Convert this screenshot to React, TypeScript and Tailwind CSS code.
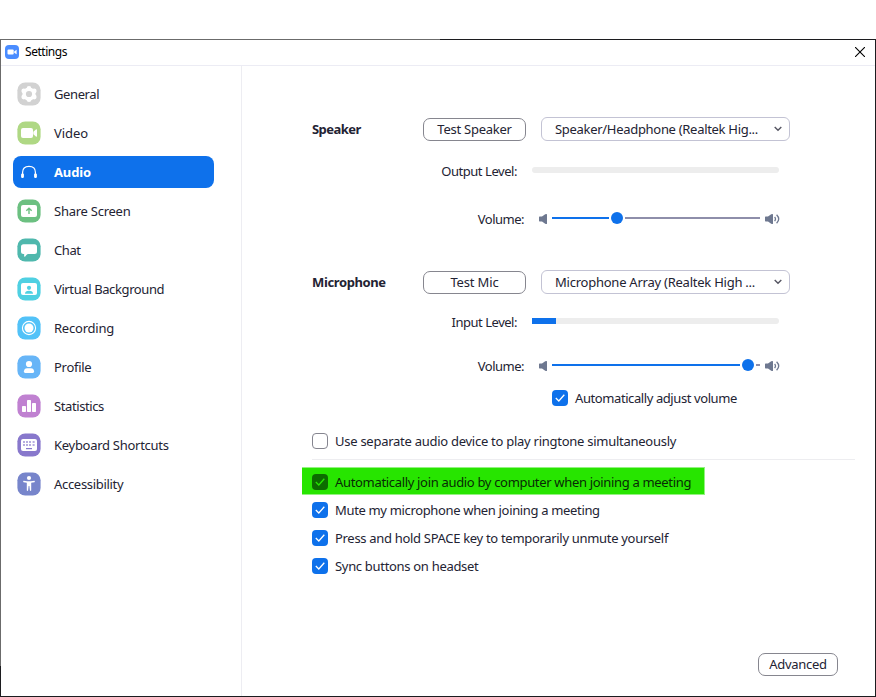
import React from "react";

const navItems = [
  { name: "General", color: "#d2d2d2", track: "tracking-[-0.4px]" },
  { name: "Video", color: "#afd884", track: "tracking-[-0.05px]" },
  { name: "Audio", color: "", track: "tracking-[-0.15px]" },
  { name: "Share Screen", color: "#6cc081", track: "tracking-[-0.25px]" },
  { name: "Chat", color: "#4fb8ad", track: "tracking-[-0.4px]" },
  { name: "Virtual Background", color: "#4fd0e2", track: "tracking-[-0.39px]" },
  { name: "Recording", color: "#52c2f8", track: "tracking-[-0.22px]" },
  { name: "Profile", color: "#67b5f7", track: "tracking-[-0.28px]" },
  { name: "Statistics", color: "#c081d1", track: "tracking-[-0.4px]" },
  { name: "Keyboard Shortcuts", color: "#8878cc", track: "tracking-[-0.28px]" },
  { name: "Accessibility", color: "#7785cb", track: "tracking-[-0.31px]" },
];

function Glyph({ name, color }: { name: string; color: string }) {
  switch (name) {
    case "General":
      return (
        <g>
          <g fill="#fff">
            <circle cx="12" cy="12" r="6.6" />
            <circle cx="12" cy="6.2" r="2.3" />
            <circle cx="12" cy="17.8" r="2.3" />
            <circle cx="6.8" cy="9" r="2.4" />
            <circle cx="17.2" cy="9" r="2.4" />
            <circle cx="6.8" cy="15" r="2.4" />
            <circle cx="17.2" cy="15" r="2.4" />
          </g>
          <circle cx="12" cy="12" r="3.1" fill={color} />
        </g>
      );
    case "Video":
      return (
        <g fill="#fff">
          <rect x="4" y="7" width="12" height="10" rx="2" />
          <path d="M16.3 10.8L19.2 8.2Q20 8 20 9V15Q20 16 19.2 15.8L16.3 13.2Z" />
        </g>
      );
    case "Audio":
      return (
        <g>
          <path d="M5.6 16.5V12.2C5.6 8.3 8.4 6.3 12 6.3s6.4 2 6.4 5.9v4.3" fill="none" stroke="#fff" strokeWidth="1.2" />
          <rect x="4.1" y="13.6" width="2.8" height="4.4" rx="1.2" fill="#fff" />
          <rect x="17.1" y="13.6" width="2.8" height="4.4" rx="1.2" fill="#fff" />
        </g>
      );
    case "Share Screen":
      return (
        <g>
          <rect x="4" y="6" width="16" height="12" rx="2" fill="#fff" />
          <path d="M12 15V9.8M9.3 11.8L12 9.2L14.7 11.8" fill="none" stroke={color} strokeWidth="1.4" />
        </g>
      );
    case "Chat":
      return <path d="M6.5 6.3H17.5Q20 6.3 20 8.8V13.5Q20 16 17.5 16H11.4Q10.2 16 9.2 17.3Q8 19 7.4 18.8Q7 18.6 7.2 16H6.5Q4 16 4 13.5V8.8Q4 6.3 6.5 6.3Z" fill="#fff" />;
    case "Virtual Background":
      return (
        <g>
          <rect x="4" y="6" width="16" height="12" rx="2" fill="#fff" />
          <circle cx="12" cy="10.8" r="2.1" fill={color} />
          <path d="M8 16.8Q8 13.8 12 13.8T16 16.8Z" fill={color} />
        </g>
      );
    case "Recording":
      return (
        <g>
          <circle cx="12" cy="12" r="6.6" fill="none" stroke="#fff" strokeWidth="1.1" />
          <circle cx="12" cy="12" r="4.5" fill="#fff" />
        </g>
      );
    case "Profile":
      return (
        <g fill="#fff">
          <circle cx="12" cy="9" r="3.1" />
          <path d="M6.9 16.6Q7.2 13.2 10 13.2H14Q16.8 13.2 17.1 16.6Q17.1 18 15.9 18H8.1Q6.9 18 6.9 16.6Z" />
        </g>
      );
    case "Statistics":
      return (
        <g fill="#fff">
          <rect x="5" y="12" width="4" height="6" rx=".7" />
          <rect x="10" y="6" width="4" height="12" rx=".7" />
          <rect x="15" y="9" width="4" height="9" rx=".7" />
        </g>
      );
    case "Keyboard Shortcuts":
      return (
        <g>
          <rect x="4" y="6" width="16" height="12" rx="2" fill="#fff" />
          <g fill={color} opacity=".6">
            {[6, 9, 12, 15.6].map((x) => (
              <React.Fragment key={x}>
                <rect x={x} y="8" width="2" height="2" />
                <rect x={x} y="11" width="2" height="2" />
              </React.Fragment>
            ))}
          </g>
          <rect x="9" y="15" width="6" height="1.2" fill={color} />
        </g>
      );
    default:
      return (
        <g fill="#fff">
          <circle cx="12" cy="6" r="2.1" />
          <path d="M6.5 8.8L10.2 9.2H13.8L17.5 8.8Q18.3 9.6 17.5 10.2L14.2 10.7V18.6Q13.6 19.4 12.9 18.6L12.4 14H11.6L11.1 18.6Q10.4 19.4 9.8 18.6V10.7L6.5 10.2Q5.7 9.6 6.5 8.8Z" />
        </g>
      );
  }
}

function NavRow({ name, color, track }: { name: string; color: string; track: string }) {
  const active = name === "Audio";
  return (
    <div className={`flex h-8 w-[201px] items-center rounded-[8px] pl-1 ${active ? "bg-[#0e71eb] font-bold text-white" : ""}`}>
      <svg width="24" height="24" viewBox="0 0 24 24" className="shrink-0">
        {!active && <rect x=".4" y=".4" width="23.2" height="23.2" rx="7.8" fill={color} />}
        <Glyph name={name} color={color} />
      </svg>
      <span className={`ml-[13px] whitespace-nowrap ${track}`}>{name}</span>
    </div>
  );
}

function Checkbox({ kind = "on" }: { kind?: "on" | "off" | "marked" }) {
  if (kind === "off") return <span className="h-4 w-4 shrink-0 rounded-[4px] border border-[#85858f] bg-white" />;
  return (
    <span className={`h-4 w-4 shrink-0 rounded-[4px] ${kind === "marked" ? "bg-[#0c6b00]" : "bg-[#0e71eb]"}`}>
      <svg width="16" height="16" viewBox="0 0 16 16" fill="none">
        <path d="M3.8 8L6.8 11L12.3 4.8" stroke={kind === "marked" ? "#27e500" : "#fff"} strokeWidth="1.3" />
      </svg>
    </span>
  );
}

function Select({ text, track }: { text: string; track: string }) {
  return (
    <div className="ml-[15px] flex h-6 w-[249px] items-center justify-between rounded-[6px] border border-[#c3c3d4] pl-[13px] pr-[7px]">
      <span className={`whitespace-nowrap ${track}`}>{text}</span>
      <svg width="8" height="6" viewBox="0 0 8 6" fill="none">
        <path d="M.7 1L4 4.3L7.3 1" stroke="#555562" strokeWidth="1.4" />
      </svg>
    </div>
  );
}

function Speaker({ loud = false }: { loud?: boolean }) {
  return (
    <svg width={loud ? 16 : 9} height="12" viewBox={loud ? "0 0 16 12" : "0 0 9 12"} className="shrink-0">
      <path d="M.6 3.6Q0 3.6 0 4.2V7.8Q0 8.4 .6 8.4H3L6.2 10.8Q8 11.6 8 10.4V1.6Q8 .5 6.2 1.2L3 3.6Z" fill="#6e7890" />
      {loud && <path d="M9.6 4Q11.4 6 9.6 8.2M11.6 1.8Q15.8 6 11.6 10.2" fill="none" stroke="#6e7890" strokeWidth="1.3" />}
    </svg>
  );
}

function VolumeRow({ filled, rest, margin }: { filled: string; rest: string; margin: string }) {
  return (
    <div className={`flex h-6 items-center ${margin}`}>
      <span className="w-[212px] text-right tracking-[-0.5px]">Volume:</span>
      <span className="ml-[15px] flex"><Speaker /></span>
      <span className="-mt-[2px] ml-1 flex items-center">
        <span className={`h-[2px] bg-[#0e71eb] ${filled}`} />
        <span className="mx-[2px] h-3 w-3 rounded-full bg-[#0e71eb]" />
        <span className={`h-[2px] bg-[#8e8eaa] ${rest}`} />
      </span>
      <span className="ml-[5px] flex"><Speaker loud /></span>
    </div>
  );
}

export default function App() {
  return (
    <div className="flex h-[697px] w-[876px] flex-col overflow-hidden bg-white pt-[39px] font-['Noto_Sans','Open_Sans',sans-serif] text-[13px] leading-[18px] text-[#232333]">
      <div className="flex h-px shrink-0">
        <div className="w-[440px] bg-[#6b6b6b]" />
        <div className="flex-1 bg-[#1c1c1f]" />
      </div>
      <div className="flex min-h-0 flex-1">
        <div className="flex w-px flex-col">
          <div className="h-[626px] bg-[#6b6b6b]" />
          <div className="flex-1 bg-[#1c1c1f]" />
        </div>
        <div className="flex flex-1 flex-col border-b border-r border-[#1c1c1f]">
          <header className="flex h-[26px] shrink-0 items-center border-b border-[#ececf4] pl-1 pr-[10px] text-[12px] text-black">
            <svg width="14" height="14" viewBox="0 0 14 14" className="-mt-px">
              <rect width="14" height="14" rx="4" fill="#4a8cff" />
              <rect x="2.5" y="4.5" width="6.2" height="5" rx="1" fill="#fff" />
              <path d="M9.2 6.4L11.6 4.8V9.2L9.2 7.7Z" fill="#fff" />
            </svg>
            <span className="-mt-[2px] ml-[6px] flex-1 tracking-[-0.45px]">Settings</span>
            <svg width="10" height="10" viewBox="0 0 10 10" className="-mt-px">
              <path d="M0 0L10 10M10 0L0 10" stroke="#000" strokeWidth="1.1" />
            </svg>
          </header>
          <div className="flex min-h-0 flex-1">
            <nav className="flex w-[241px] flex-col gap-[7px] border-r border-[#ededf2] pl-3 pt-3">
              {navItems.map((item) => <NavRow key={item.name} {...item} />)}
            </nav>
            <main className="flex flex-1 flex-col pl-[70px] pt-[51px]">
              <div className="flex h-6 items-center">
                <b className="w-[111px] tracking-[-0.55px]">Speaker</b>
                <button className="mt-px h-[23px] w-[103px] rounded-[7px] border border-[#86868f] tracking-[-0.25px]"><span className="relative -top-px">Test Speaker</span></button>
                <Select text="Speaker/Headphone (Realtek Hig..." track="tracking-[-0.3px]" />
              </div>
              <div className="mt-[18px] flex h-6 items-center">
                <span className="w-[205px] text-right tracking-[-0.45px]">Output Level:</span>
                <span className="-mt-[2px] ml-[15px] h-[6px] w-[247px] rounded-[3px] bg-[#ededed]" />
              </div>
              <VolumeRow filled="w-[57px]" rest="w-[135px]" margin="mt-6" />
              <div className="mt-[39px] flex h-6 items-center">
                <b className="w-[111px] tracking-[-0.38px]">Microphone</b>
                <button className="mt-px h-[23px] w-[103px] rounded-[7px] border border-[#86868f] tracking-[-0.15px]"><span className="relative -top-px">Test Mic</span></button>
                <Select text="Microphone Array (Realtek High ..." track="tracking-[-0.24px]" />
              </div>
              <div className="mt-4 flex h-6 items-center">
                <span className="w-[205px] text-right tracking-[-0.48px]">Input Level:</span>
                <span className="-mt-[2px] ml-[15px] h-[6px] w-[247px] rounded-r-[3px] bg-[#ededed]">
                  <span className="block h-full w-6 bg-[#0e71eb]" />
                </span>
              </div>
              <VolumeRow filled="w-[188px]" rest="w-[4px]" margin="mt-5" />
              <div className="mt-2 flex h-6 items-center gap-[7px] pl-[240px] tracking-[-0.41px]">
                <Checkbox /><span>Automatically adjust volume</span>
              </div>
              <div className="mt-[19px] flex h-6 items-center gap-[7px] tracking-[-0.265px]">
                <Checkbox kind="off" /><span>Use separate audio device to play ringtone simultaneously</span>
              </div>
              <div className="mt-[6px] h-px w-[543px] bg-[#ededf0]" />
              <div className="-ml-[10px] mt-[7px] flex h-7 w-[403px] items-center gap-[7px] border-y border-r border-[#93f280] bg-[#27e500] pl-[10px] pt-[2px] tracking-[-0.325px] text-[#082b05]">
                <Checkbox kind="marked" /><span className="whitespace-nowrap">Automatically join audio by computer when joining a meeting</span>
              </div>
              <div className="mt-px flex h-7 items-center gap-[7px] tracking-[-0.34px]">
                <Checkbox /><span>Mute my microphone when joining a meeting</span>
              </div>
              <div className="flex h-7 items-center gap-[7px] tracking-[-0.31px]">
                <Checkbox /><span>Press and hold SPACE key to temporarily unmute yourself</span>
              </div>
              <div className="flex h-7 items-center gap-[7px] tracking-[-0.31px]">
                <Checkbox /><span>Sync buttons on headset</span>
              </div>
              <button className="ml-[446px] mt-[73px] h-[23px] w-20 rounded-[7px] border border-[#86868f] tracking-[-0.3px]"><span className="relative -top-px">Advanced</span></button>
            </main>
          </div>
        </div>
      </div>
    </div>
  );
}
